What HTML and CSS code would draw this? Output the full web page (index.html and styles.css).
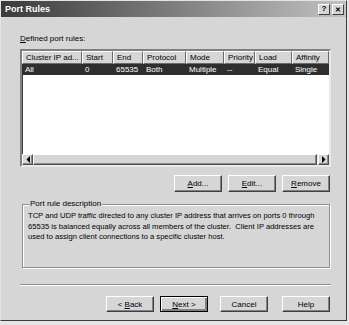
FILE: index.html
```html
<!DOCTYPE html>
<html>
<head>
	<meta charset="utf-8">
	<title>Port Rules</title>
	<link rel="stylesheet" href="styles.css">
</head>
<body>
	<div class="window">
		<div class="titlebar">
			<span class="title">Port Rules</span>
			<span class="capbtn">?</span>
			<span class="capbtn close">&#x2715;</span>
		</div>
		<div class="content">
			<div class="label"><u>D</u>efined port rules:</div>
			<div class="list">
				<div class="grid head">
					<span>Cluster IP ad...</span>
					<span>Start</span>
					<span>End</span>
					<span>Protocol</span>
					<span>Mode</span>
					<span>Priority</span>
					<span>Load</span>
					<span>Affinity</span>
				</div>
				<div class="grid row selected">
					<span>All</span>
					<span>0</span>
					<span>65535</span>
					<span>Both</span>
					<span>Multiple</span>
					<span>--</span>
					<span>Equal</span>
					<span>Single</span>
				</div>
				<div class="filler"></div>
				<div class="hscroll">
					<span class="arrow">
						<svg width="4" height="7" viewBox="0 0 4 7"><path d="M4 0V7L0.5 3.5Z" fill="#000"/></svg>
					</span>
					<span class="thumb"></span>
					<span class="arrow">
						<svg width="4" height="7" viewBox="0 0 4 7"><path d="M0 0V7L3.5 3.5Z" fill="#000"/></svg>
					</span>
				</div>
			</div>
			<div class="btnrow">
				<button class="btn"><u>A</u>dd...</button>
				<button class="btn"><u>E</u>dit...</button>
				<button class="btn"><u>R</u>emove</button>
			</div>
			<fieldset class="group">
				<legend>Port rule description</legend>
				<p>TCP and UDP traffic directed to any cluster IP address that arrives on ports 0 through<br>
				65535 is balanced equally across all members of the cluster.&nbsp; Client IP addresses are<br>
				used to assign client connections to a specific cluster host.</p>
			</fieldset>
			<div class="separator"></div>
			<div class="footer">
				<button class="btn">&lt; <u>B</u>ack</button>
				<button class="btn default"><u>N</u>ext &gt;</button>
				<button class="btn cancel">Cancel</button>
				<button class="btn help">Help</button>
			</div>
		</div>
	</div>
</body>
</html>
```

FILE: styles.css
```css
body{
	margin:0;
	background:#e6e6e6;
	font-family:"Liberation Sans", Arial, sans-serif;
	font-size:8px;
	color:#000;
}
.window{
	width:347px;
	height:321px;
	box-sizing:border-box;
	background:#d6d6d6;
	border:1px solid;
	border-color:#e4e4e4 #3a3a3a #3a3a3a #e4e4e4;
}
.titlebar{
	height:16px;
	display:flex;
	align-items:center;
	padding:0 2px 0 4px;
	background:linear-gradient(to right, #3a3a3a, #c2c2c2);
}
.title{
	flex:1;
	color:#fff;
	font-weight:bold;
	font-size:9px;
}
.capbtn{
	width:12px;
	height:11px;
	box-sizing:border-box;
	display:flex;
	align-items:center;
	justify-content:center;
	background:#d6d6d6;
	border:1px solid;
	border-color:#fff #404040 #404040 #fff;
	font-weight:bold;
	font-size:8px;
	line-height:1;
}
.close{
	margin-left:2px;
	font-size:7px;
}
.content{
	padding:0 15px 0 19px;
}
.label{
	margin-top:17px;
	line-height:10px;
}
.list{
	margin-top:5px;
	height:118px;
	box-sizing:border-box;
	background:#fff;
	border:2px solid;
	border-color:#808080 #e8e8e8 #e8e8e8 #808080;
	box-shadow:inset 1px 1px #404040;
	display:flex;
	flex-direction:column;
}
.grid{
	display:grid;
	grid-template-columns:60px 31px 30px 43px 38px 31px 37px 37px;
}
.head span{
	height:13px;
	box-sizing:border-box;
	line-height:11px;
	padding-left:3px;
	background:#d6d6d6;
	border:1px solid;
	border-color:#fff #6a6a6a #6a6a6a #fff;
	white-space:nowrap;
	overflow:hidden;
}
.row span{
	height:11px;
	line-height:11px;
	padding-left:3px;
	white-space:nowrap;
}
.selected{
	background:#2e2e2e;
	color:#fff;
}
.filler{
	flex:1;
}
.hscroll{
	height:11px;
	display:flex;
	background:#ececec;
}
.arrow, .thumb{
	box-sizing:border-box;
	background:#d6d6d6;
	border:1px solid;
	border-color:#fff #505050 #505050 #fff;
	box-shadow:inset -1px -1px #8a8a8a;
}
.arrow{
	width:11px;
	display:flex;
	align-items:center;
	justify-content:center;
}
.thumb{
	flex:1;
	margin-right:1px;
}
.btn{
	width:48px;
	height:17px;
	padding:0;
	box-sizing:border-box;
	background:#d6d6d6;
	border:1px solid;
	border-color:#fff #404040 #404040 #fff;
	box-shadow:inset -1px -1px #808080;
	font-family:"Liberation Sans", Arial, sans-serif;
	font-size:8px;
	color:#000;
}
.btnrow{
	margin-top:8px;
	padding-right:1px;
	display:flex;
	justify-content:flex-end;
	gap:6px;
}
.group{
	margin:7px 1px 0 2px;
	height:69px;
	box-sizing:border-box;
	padding:2px 2px 0 5px;
	border:1px solid #8e8e8e;
	box-shadow:inset 1px 1px #fff, 1px 1px #fff;
}
.group legend{
	padding:0 1px;
	margin-left:1px;
	line-height:10px;
	background:#d6d6d6;
}
.group p{
	margin:0;
	line-height:10.5px;
	font-size:7.6px;
	white-space:nowrap;
}
.separator{
	margin-top:16px;
	height:1px;
	border-top:1px solid #8e8e8e;
	background:#fff;
}
.footer{
	margin-top:10px;
	padding-right:1px;
	display:flex;
	justify-content:flex-end;
	gap:6px;
}
.footer .btn{
	height:16px;
}
.default{
	border:1px solid #000;
	box-shadow:inset 1px 1px #fff, inset -2px -2px #808080;
}
.cancel{
	margin-left:6px;
}
.help{
	margin-left:8px;
}
```
